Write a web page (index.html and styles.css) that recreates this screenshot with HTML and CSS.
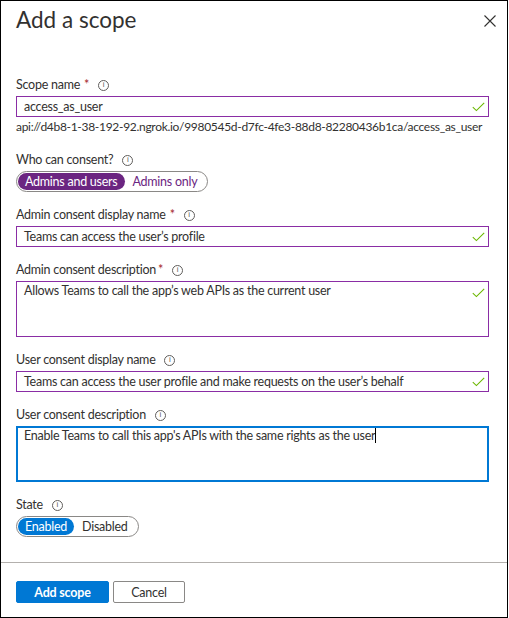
FILE: index.html
```html
<!DOCTYPE html>
<html>
<head>
<meta charset="utf-8">
<link rel="stylesheet" href="styles.css">
</head>
<body>
<div class="panel">
  <div class="header">
    <h1 class="title">Add a scope</h1>
    <button class="close" aria-label="Close">
      <svg width="12" height="12" viewBox="0 0 12 12"><path d="M0.5 0.5 L11.5 11.5 M11.5 0.5 L0.5 11.5" stroke="#323130" stroke-width="1.1" fill="none"/></svg>
    </button>
  </div>
  <div class="form">
    <div class="field">
      <div class="label">Scope name<span class="req">*</span><span class="info">i</span></div>
      <div class="input dirty"><span class="value">access_as_user</span><svg class="check" width="13" height="10" viewBox="0 0 13 10"><path d="M0.8 5.2 L4.4 8.6 L12.2 0.8" stroke="#6bb700" stroke-width="1.1" fill="none"/></svg></div>
      <div class="hint">api://d4b8-1-38-192-92.ngrok.io/9980545d-d7fc-4fe3-88d8-82280436b1ca/access_as_user</div>
    </div>
    <div class="field">
      <div class="label">Who can consent?<span class="info">i</span></div>
      <div class="toggle purple"><span class="opt on">Admins and users</span><span class="opt">Admins only</span></div>
    </div>
    <div class="field">
      <div class="label">Admin consent display name<span class="req">*</span><span class="info">i</span></div>
      <div class="input dirty"><span class="value">Teams can access the user’s profile</span><svg class="check" width="13" height="10" viewBox="0 0 13 10"><path d="M0.8 5.2 L4.4 8.6 L12.2 0.8" stroke="#6bb700" stroke-width="1.1" fill="none"/></svg></div>
    </div>
    <div class="field">
      <div class="label">Admin consent description<span class="req tight">*</span><span class="info">i</span></div>
      <div class="input area dirty"><span class="value">Allows Teams to call the app’s web APIs as the current user</span><svg class="check" width="13" height="10" viewBox="0 0 13 10"><path d="M0.8 5.2 L4.4 8.6 L12.2 0.8" stroke="#6bb700" stroke-width="1.1" fill="none"/></svg></div>
    </div>
    <div class="field">
      <div class="label">User consent display name<span class="info">i</span></div>
      <div class="input dirty"><span class="value">Teams can access the user profile and make requests on the user’s behalf</span><svg class="check" width="13" height="10" viewBox="0 0 13 10"><path d="M0.8 5.2 L4.4 8.6 L12.2 0.8" stroke="#6bb700" stroke-width="1.1" fill="none"/></svg></div>
    </div>
    <div class="field">
      <div class="label">User consent description<span class="info">i</span></div>
      <div class="input area focused"><span class="value">Enable Teams to call this app's APIs with the same rights as the user<span class="caret"></span></span></div>
    </div>
    <div class="field">
      <div class="label">State<span class="info">i</span></div>
      <div class="toggle blue"><span class="opt on">Enabled</span><span class="opt">Disabled</span></div>
    </div>
  </div>
  <div class="footer">
    <button class="btn primary">Add scope</button>
    <button class="btn secondary">Cancel</button>
  </div>
</div>
</body>
</html>
```
FILE: styles.css
```css
* { box-sizing: border-box; }
html, body { margin: 0; padding: 0; background: #fff; }
body {
  font-family: Lato, "Open Sans", "Liberation Sans", sans-serif;
  color: #323130;
  font-size: 12.5px;
  letter-spacing: -0.25px;
}
.panel {
  width: 508px;
  height: 618px;
  border: 1px solid #000;
  display: flex;
  flex-direction: column;
}
.header {
  display: flex;
  justify-content: space-between;
  align-items: flex-start;
  padding: 4px 10px 0 15px;
  height: 74px;
}
.title {
  margin: 0;
  font-size: 22.5px;
  font-weight: 400;
  line-height: 30px;
  letter-spacing: 0;
  color: #323130;
}
.close {
  border: 0;
  background: none;
  padding: 0;
  margin-top: 10px;
  margin-right: 1px;
  width: 12px;
  height: 12px;
  display: flex;
}
.form {
  flex: 1;
  padding: 0 18px 0 15px;
}
.field { margin-bottom: 13px; }
.label {
  height: 20px;
  line-height: 20px;
  display: flex;
  align-items: center;
  white-space: pre;
}
.req { color: #a4262c; margin-left: 4px; }
.req.tight { margin-left: 2px; }
.info {
  display: inline-flex;
  align-items: center;
  justify-content: center;
  width: 11px;
  height: 11px;
  border: 1px solid #605e5c;
  border-radius: 50%;
  font-size: 8px;
  line-height: 1;
  letter-spacing: 0;
  color: #605e5c;
  margin-left: 9px;
  font-family: "Liberation Sans", sans-serif;
}
.input {
  margin-top: 1px;
  height: 21px;
  border: 1px solid #8a2da5;
  display: flex;
  align-items: center;
  justify-content: space-between;
  padding: 0 3px 0 7px;
}
.input.area {
  height: 56px;
  align-items: flex-start;
  padding-top: 1px;
}
.input.area .check { margin-top: 5px; }
.input.focused { border: 2px solid #0078d4; padding-left: 6px; padding-top: 0; }
.value { white-space: nowrap; }
.caret {
  display: inline-block;
  width: 1px;
  height: 15px;
  background: #000;
  vertical-align: -3px;
}
.hint { line-height: 20px; white-space: nowrap; font-size: 12px; letter-spacing: -0.3px; }
.toggle {
  margin-top: 1px;
  display: inline-flex;
  align-items: center;
  height: 21px;
  border: 1px solid #8a8886;
  border-radius: 11px;
  padding: 0 1px;
}
.toggle .opt {
  height: 17px;
  line-height: 17px;
  padding: 0 7px;
  border-radius: 9px;
}
.toggle .opt + .opt { padding: 0 9px 0 8px; }
.toggle.purple .opt { color: #6b2581; }
.toggle.purple .opt.on { background: #6b2581; color: #fff; }
.toggle.blue .opt { color: #323130; }
.toggle.blue .opt.on { background: #0078d4; color: #fff; }
.footer {
  border-top: 1px solid #b3b0ad;
  padding: 18px 15px 14px;
  display: flex;
  gap: 4px;
}
.btn {
  font-family: inherit;
  font-size: 12.5px;
  letter-spacing: -0.2px;
  height: 22px;
  border-radius: 2px;
  padding: 0;
}
.btn.primary {
  width: 93px;
  background: #0078d4;
  border: 1px solid #0078d4;
  color: #fff;
  font-weight: 700;
}
.btn.secondary {
  width: 72px;
  background: #fff;
  border: 1px solid #8a8886;
  color: #323130;
}
```
